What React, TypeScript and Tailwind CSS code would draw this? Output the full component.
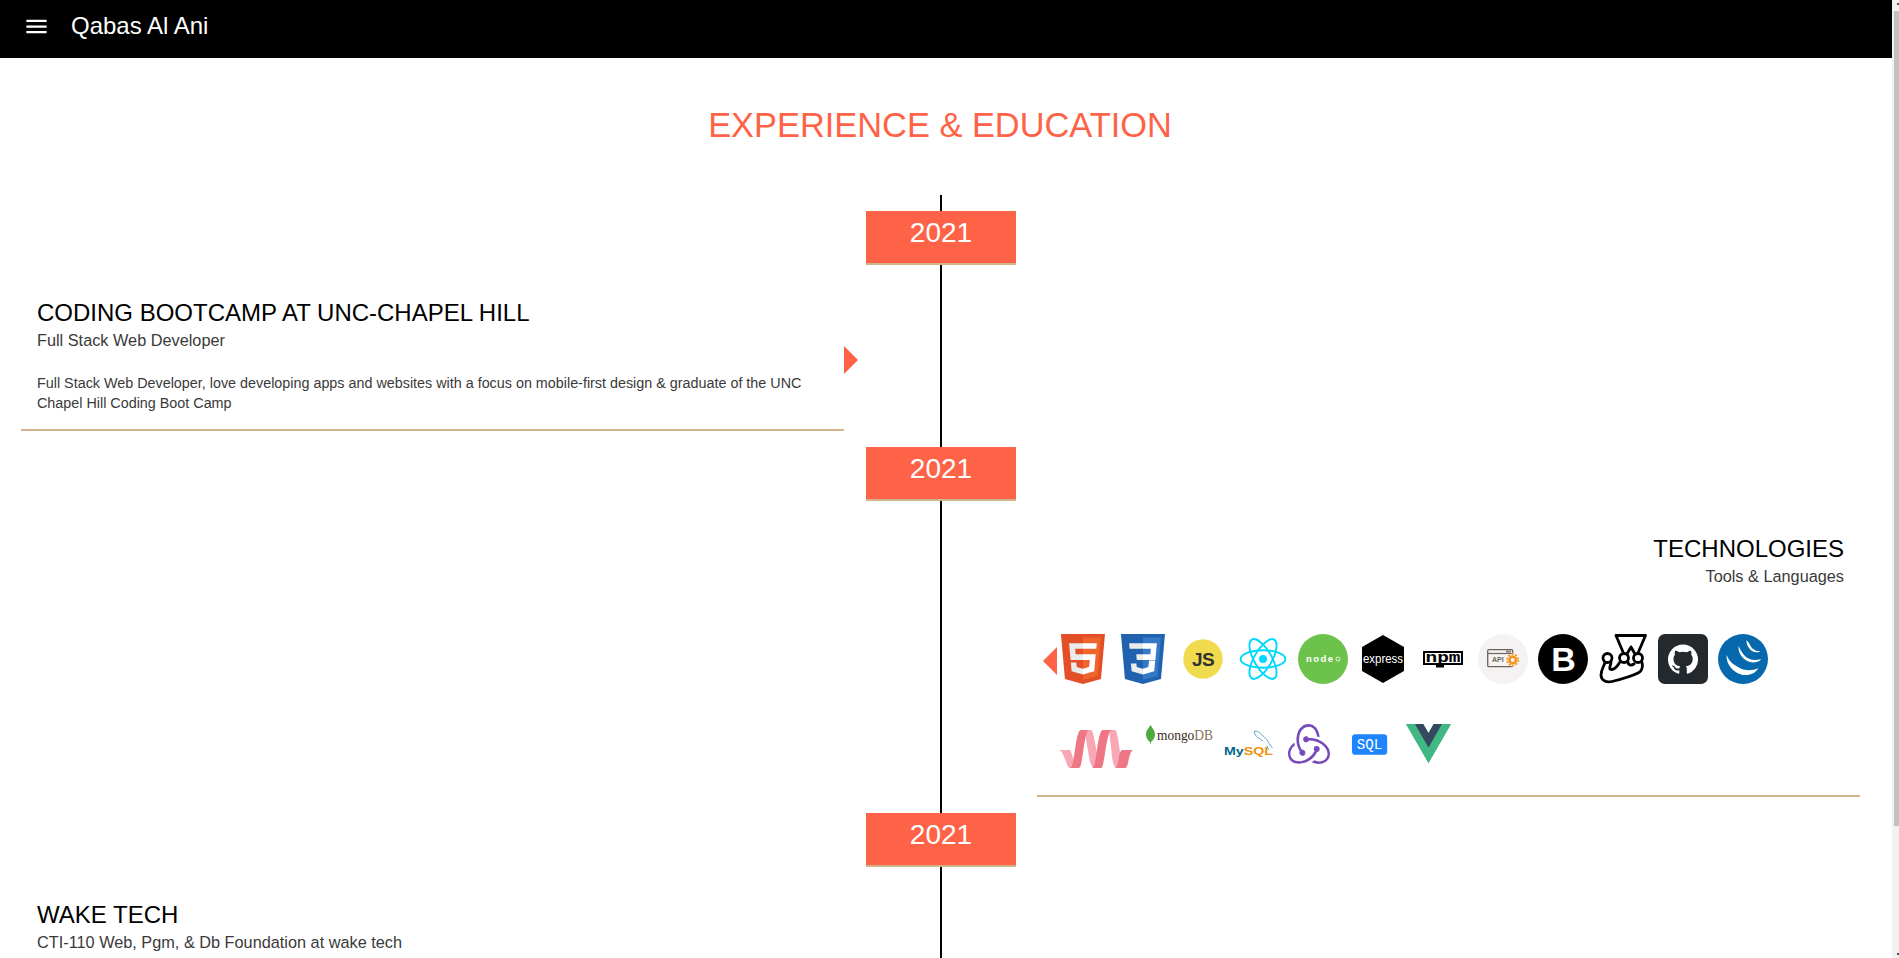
import React from "react";
import { SiRedux } from "react-icons/si";

const Html5 = () => (
  <svg viewBox="0 0 512 512" width="50" height="50" className="shrink-0">
    <path fill="#E34F26" d="M71,460 L30,0 481,0 440,460 255,512" />
    <path fill="#EF652A" d="M256,472 L405,431 440,37 256,37" />
    <path fill="#EBEBEB" d="M256,208 L181,208 176,150 256,150 256,94 255,94 114,94 115,109 129,265 256,265zM256,355 L255,355 192,338 188,293 158,293 132,293 139,382 255,414 256,414z" />
    <path fill="#FFF" d="M255,208 L255,265 325,265 318,338 255,355 255,414 371,382 372,372 385,223 387,208 371,208zM255,94 L255,150 392,150 392,150 392,150 393,138 396,109 397,94z" />
  </svg>
);

const Css3 = () => (
  <svg viewBox="0 0 512 512" width="50" height="50" className="shrink-0">
    <path fill="#2062AF" d="M71 460 30 0h451l-41 460-185 52" />
    <path fill="#3478C6" d="M256 472l149-41 35-394H256" />
    <path fill="#fff" d="M256 208h75l5-58h-80V94h142l-1 15-14 156H256z" />
    <path fill="#EBEBEB" d="M256 355h-1l-63-17-4-35h-56l8 79 115 32h1z" />
    <path fill="#fff" d="M318 272l-7 66-56 17v59l116-32 1-10 9-100z" />
    <path fill="#EBEBEB" d="M256 94v56H119l-1-13-3-29-1-14zm0 114v57h-64l-1-13-3-29-1-15z" />
  </svg>
);

const Js = () => (
  <svg viewBox="0 0 50 50" width="50" height="50" className="shrink-0">
    <circle cx="25" cy="25" r="19.7" fill="#F0DB4F" />
    <text x="25" y="32" textAnchor="middle" fontFamily="'Liberation Sans', sans-serif" fontWeight="700" fontSize="19" letterSpacing="-0.5" fill="#323330">JS</text>
  </svg>
);

const ReactLogo = () => (
  <svg viewBox="0 0 50 50" width="50" height="50" className="shrink-0">
    <g fill="none" stroke="#00D8FF" strokeWidth="1.9">
      <ellipse cx="25" cy="25" rx="22.4" ry="8.8" />
      <ellipse cx="25" cy="25" rx="22.4" ry="8.8" transform="rotate(60 25 25)" />
      <ellipse cx="25" cy="25" rx="22.4" ry="8.8" transform="rotate(120 25 25)" />
    </g>
    <circle cx="25" cy="25" r="4" fill="#00D8FF" />
  </svg>
);

const Node = () => (
  <svg viewBox="0 0 50 50" width="50" height="50" className="shrink-0">
    <circle cx="25" cy="25" r="25" fill="#6CC24A" />
    <text x="8" y="28" textLength="27" fontFamily="'Liberation Sans', sans-serif" fontWeight="700" fontSize="9.500" fill="#fff">node</text>
    <circle cx="40" cy="25" r="2" fill="none" stroke="#fff" strokeWidth="0.8" />
  </svg>
);

const Express = () => (
  <svg viewBox="0 0 50 50" width="50" height="50" className="shrink-0">
    <polygon points="25,1 46,13 46,37 25,49 4,37 4,13" fill="#000" />
    <text x="5" y="29" textLength="40" lengthAdjust="spacingAndGlyphs" fontFamily="'Liberation Sans', sans-serif" fontSize="13" fill="#fff">express</text>
  </svg>
);

const Npm = () => (
  <svg viewBox="0 0 50 50" width="50" height="50" className="shrink-0">
    <path d="M5 17h40v14H26v2.500h-8V31H5z" fill="#000" />
    <rect x="7" y="19" width="36" height="10" fill="#fff" />
    <text x="7.500" y="28" textLength="35" lengthAdjust="spacingAndGlyphs" fontFamily="'Liberation Mono', monospace" fontWeight="700" fontSize="14" fill="#000">npm</text>
  </svg>
);

const Api = () => (
  <svg viewBox="0 0 50 50" width="50" height="50" className="shrink-0">
    <circle cx="25" cy="25" r="25" fill="#F4F2F2" />
    <rect x="9.700" y="15.700" width="25" height="17" rx="1" fill="none" stroke="#6D645C" strokeWidth="1.300" />
    <line x1="10" y1="19.500" x2="35" y2="19.500" stroke="#6D645C" strokeWidth="1.200" />
    <rect x="28" y="16.500" width="5" height="2" fill="#8A8178" />
    <text x="14" y="28" fontFamily="'Liberation Sans', sans-serif" fontWeight="700" fontSize="7" fill="#6D645C">API</text>
    <circle cx="34.700" cy="26" r="6.500" fill="#F4F2F2" />
    <circle cx="34.700" cy="26" r="3.300" fill="none" stroke="#F7941D" strokeWidth="2.600" />
    <circle cx="34.700" cy="26" r="5.600" fill="none" stroke="#F7941D" strokeWidth="1.600" strokeDasharray="2 1.500" />
  </svg>
);

const Bootstrap = () => (
  <svg viewBox="0 0 50 50" width="50" height="50" className="shrink-0">
    <circle cx="25" cy="25" r="25" fill="#000" />
    <text x="25.500" y="37" textAnchor="middle" fontFamily="'Liberation Sans', sans-serif" fontWeight="700" fontSize="34" fill="#fff">B</text>
  </svg>
);

const Jest = () => (
  <svg viewBox="0 0 50 50" width="50" height="50" className="shrink-0">
    <g fill="none" stroke="#000" strokeWidth="2.800" strokeLinejoin="round" strokeLinecap="round">
      <path d="M18 1.500H47.500L40 19M18 1.500L25 18" />
      <path d="M33 13L29 20M33 13L37 20" />
      <circle cx="9.500" cy="24" r="4.500" />
      <circle cx="26" cy="24" r="4.500" />
      <circle cx="40" cy="24" r="4.500" />
      <path d="M7 28.500C6 32 3 36 3 41C3 46 8 49 14 47.500C22 45.500 32 43 40 39C44 37 45 33 44 28.500" />
      <path d="M13 28C13 31 11 33 12 35C15 37 19 33 22 28M30 28C30 31 33 32 36 30" />
    </g>
  </svg>
);

const GitHub = () => (
  <svg viewBox="0 0 50 50" width="50" height="50" className="shrink-0">
    <rect width="50" height="50" rx="7" fill="#24292E" />
    <g transform="translate(10 10.500) scale(1.880)">
      <path fill="#fff" d="M8 0C3.580 0 0 3.580 0 8c0 3.540 2.290 6.530 5.470 7.590.4.070.55-.17.55-.38 0-.19-.01-.82-.01-1.490-2.010.37-2.530-.49-2.690-.94-.09-.23-.48-.94-.82-1.130-.28-.15-.68-.52-.01-.53.63-.01 1.080.58 1.230.82.72 1.210 1.870.87 2.330.66.07-.52.28-.87.51-1.070-1.780-.2-3.640-.89-3.640-3.950 0-.87.31-1.590.82-2.150-.08-.2-.36-1.020.08-2.120 0 0 .67-.21 2.200.82.64-.18 1.320-.27 2-.27.68 0 1.360.09 2 .27 1.530-1.040 2.200-.82 2.200-.82.44 1.100.16 1.920.08 2.120.51.56.82 1.270.82 2.150 0 3.070-1.870 3.750-3.650 3.950.29.25.54.73.54 1.480 0 1.070-.01 1.930-.01 2.200 0 .21.15.46.55.38A8.013 8.013 0 0016 8c0-4.420-3.580-8-8-8z" />
    </g>
  </svg>
);

const JQuery = () => (
  <svg viewBox="0 0 50 50" width="50" height="50" className="shrink-0">
    <circle cx="25" cy="25" r="25" fill="#0769AD" />
    <g fill="#fff">
      <path d="M8.700 21C7.500 32 19 42 29 41C34 40.800 38 38 40.500 34.300C34 37 26 37 20 33C14 30 10.500 26 8.700 21Z" />
      <path d="M20.500 12C19.500 22 31 33 42 26.500L43 25C37 27 30 26 26 21C23.500 18 22 15 20.500 12Z" />
      <path d="M28.500 6C28 13 35 21 42 17.500L41 17C37 17.500 33.500 14 32 11C31 9 30 7.500 28.500 6Z" />
    </g>
  </svg>
);

const Materialize = () => (
  <svg viewBox="0 0 78 50" width="78" height="50" className="shrink-0">
    <g fill="#F7A8B4">
      <path d="M1 26H12C15 31 17 44 21 44H12C8 44 7 28 1 26Z" />
      <path d="M25 6H33C37 6 39 44 45 44H36C30 44 29 6 25 6Z" />
      <path d="M50 6H57C61 6 62 44 67 44H58C53 44 53 6 50 6Z" />
    </g>
    <g fill="#EF7685">
      <path d="M12 44H21C25 44 26 6 31 6H23C17 6 17 44 12 44Z" />
      <path d="M34 44H43C47 44 48 6 54 6H45C39 6 39 44 34 44Z" />
      <path d="M57 44H67C71 44 70 29 75 26H64C60 28 61 44 57 44Z" />
    </g>
  </svg>
);

const Mongo = () => (
  <svg viewBox="0 0 68 50" width="68" height="50" className="shrink-0">
    <path d="M4.500 1C6 4 9 6 9 10.500C9 14 6.500 17 5 18L4.800 20H4.200L4 18C2.500 17 0 14 0 10.500C0 6 3 4 4.500 1Z" fill="#4FAA41" />
    <text x="11" y="15.500" textLength="56" lengthAdjust="spacingAndGlyphs" fontFamily="'Liberation Serif', serif" fontSize="14" fill="#3A2A1C">
      mongo<tspan fill="#85725C">DB</tspan>
    </text>
  </svg>
);

const MySql = () => (
  <svg viewBox="0 0 54 50" width="54" height="50" className="shrink-0">
    <text x="0" y="31" textLength="49" lengthAdjust="spacingAndGlyphs" fontFamily="'Liberation Sans', sans-serif" fontWeight="700" fontSize="11.500" fill="#00678C">
      My<tspan fill="#F29111">SQL</tspan>
    </text>
    <path d="M30 7.500C33 6.500 36 8.500 38 11C41 14 44 16 45 19.500M30 7.500C31 11 33 14 36 14.500C37 16 38 17 39 16.500M45 19.500L48.500 24M43 21.500L44.500 26" fill="none" stroke="#3E8FB0" strokeWidth="0.800" />
  </svg>
);

const Sql = () => (
  <svg viewBox="0 0 47 50" width="46" height="50" className="shrink-0">
    <rect x="2" y="10" width="36" height="21" rx="3.500" fill="#1E85FF" />
    <text x="20" y="25.500" textAnchor="middle" fontFamily="'Liberation Mono', monospace" fontSize="14.500" fill="#fff">SQL</text>
  </svg>
);

const Vue = () => (
  <svg viewBox="0 0 256 221" width="45" height="39" className="shrink-0">
    <path fill="#41B883" d="M204.800 0H256L128 220.800 0 0h97.920L128 51.200 157.440 0h47.360Z" />
    <path fill="#41B883" d="m0 0 128 220.800L256 0h-51.200L128 132.480 50.560 0H0Z" />
    <path fill="#35495E" d="M50.560 0 128 133.120 204.800 0h-47.360L128 51.200 97.920 0H50.560Z" />
  </svg>
);

const YearBadge = () => (
  <div className="relative z-10 h-[54px] w-[150px] shrink-0 self-center border-b-2 border-[#d2b48c] bg-[#ff6347] pt-[6px] text-center text-[28px] leading-[32px] text-white">
    2021
  </div>
);

export default function App() {
  return (
    <div className="flex h-[958px] overflow-hidden bg-white font-['Liberation_Sans',Arial,sans-serif]">
      <div className="flex w-[1892px] shrink-0 flex-col">
        <header className="flex h-[58px] shrink-0 items-center bg-black pb-[6px] pl-[23px] text-white">
          <svg viewBox="0 0 24 24" width="27" height="27" fill="currentColor">
            <path d="M3 18h18v-2H3v2zm0-5h18v-2H3v2zm0-7v2h18V6H3z" />
          </svg>
          <span className="ml-[21px] text-[24px] leading-[28px]">Qabas Al Ani</span>
        </header>

        <main className="flex-1">
          <h1 className="flex h-[137px] items-center justify-center pb-[2px] pr-[12px] text-[34.4px] text-[#ff6347]">EXPERIENCE &amp; EDUCATION</h1>

          <div className="relative ml-[21px] flex w-[1840px] flex-col pt-[16px]">
            <div className="absolute bottom-0 left-[919px] top-0 w-[2px] bg-black" />

            <YearBadge />
            <section className="relative mb-[16px] mt-[34px] w-[823px] self-start border-b-2 border-[#d2b48c] pb-[16px] pl-[16px] pr-[16px] text-[#3a3a3a]">
              <h2 className="text-[24px] leading-[28px] text-black">CODING BOOTCAMP AT UNC-CHAPEL HILL</h2>
              <h3 className="mt-[1px] text-[16.3px] leading-[24px]">Full Stack Web Developer</h3>
              <p className="mt-[21px] text-[14.35px] leading-[20px]">
                Full Stack Web Developer, love developing apps and websites with a focus on mobile-first design &amp; graduate of the UNC Chapel Hill Coding Boot Camp
              </p>
              <span className="absolute -right-[14px] top-[47px] border-y-[14px] border-l-[14px] border-y-transparent border-l-[#ff6347]" />
            </section>

            <YearBadge />
            <section className="relative mb-[16px] mr-px mt-[34px] w-[823px] self-end border-b-2 border-[#d2b48c] pb-[21px] pl-[21px] pr-[16px]">
              <h2 className="text-right text-[24px] leading-[28px] text-black">TECHNOLOGIES</h2>
              <h3 className="mt-[1px] text-right text-[16.3px] leading-[24px] text-[#3a3a3a]">Tools &amp; Languages</h3>
              <div className="mt-[46px] flex gap-[10px]">
                <Html5 />
                <Css3 />
                <Js />
                <ReactLogo />
                <Node />
                <Express />
                <Npm />
                <Api />
                <Bootstrap />
                <Jest />
                <GitHub />
                <JQuery />
              </div>
              <div className="mt-[40px] flex items-start gap-[10px]">
                <Materialize />
                <Mongo />
                <MySql />
                <div className="h-[50px] w-[52px] shrink-0">
                  <SiRedux className="-mt-px h-[42px] w-[42px] text-[#764ABC]" />
                </div>
                <Sql />
                <Vue />
              </div>
              <span className="absolute left-[6px] top-[112px] border-y-[14px] border-r-[14px] border-y-transparent border-r-[#ff6347]" />
            </section>

            <YearBadge />
            <section className="relative mt-[34px] w-[823px] self-start pb-[40px] pl-[16px] pr-[16px] text-[#3a3a3a]">
              <h2 className="text-[24px] leading-[28px] text-black">WAKE TECH</h2>
              <h3 className="mt-[1px] text-[16.3px] leading-[24px]">CTI-110 Web, Pgm, &amp; Db Foundation at wake tech</h3>
            </section>
          </div>
        </main>
      </div>

      <div className="flex w-[7px] shrink-0 flex-col bg-[#f1f1f1] pl-[2px]">
        <div className="ml-auto mt-[3px] h-[2px] w-[2px] bg-[#505050]" />
        <div className="mt-[6px] h-[815px] bg-[#c1c1c1]" />
        <div className="ml-auto mb-[3px] mt-auto h-[2px] w-[2px] bg-[#505050]" />
      </div>
    </div>
  );
}
